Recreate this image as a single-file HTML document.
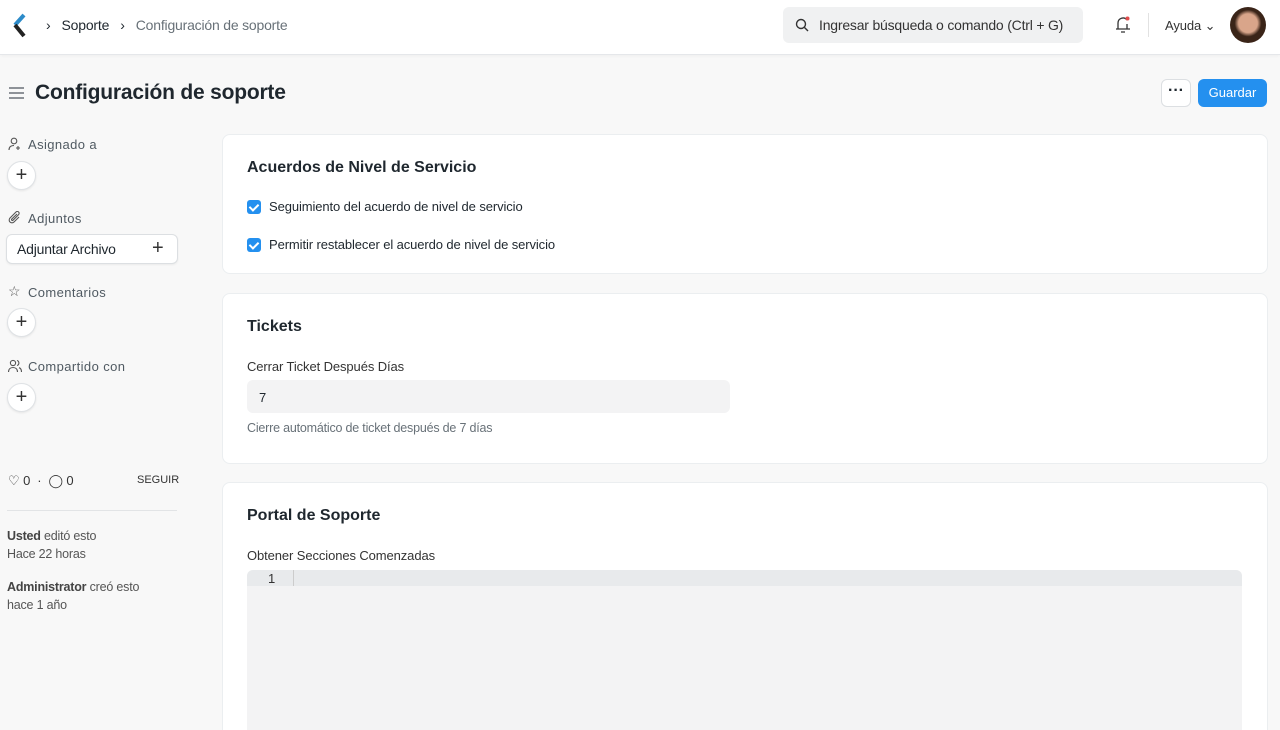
<!DOCTYPE html>
<html style="width:1280px;height:730px;overflow:hidden"><head><meta charset="utf-8"><style>
*{box-sizing:border-box;margin:0;padding:0}
body{width:1280px;height:730px;overflow:hidden;background:#f8f8f8;font-family:"Liberation Sans",sans-serif;color:#1f272e;position:relative}
.nav{position:absolute;left:0;top:0;width:1280px;height:55px;background:#fff;border-bottom:1px solid #e5e7ea;box-shadow:0 1px 3px rgba(0,0,0,.04)}
.abs{position:absolute}
.t13{font-size:13px;letter-spacing:-.1px}
.card{position:absolute;left:222px;width:1046px;background:#fff;border:1px solid #ebeef0;border-radius:8px}
.h{font-size:16px;font-weight:bold;position:absolute;left:24px}
.cb{position:absolute;left:25px;width:14px;height:14px;border-radius:3px;background:#2490ef}
.cb:after{content:"";position:absolute;left:4px;top:2px;width:4px;height:7px;border:solid #fff;border-width:0 2px 2px 0;transform:rotate(45deg)}
.plus{position:absolute;left:7px;width:29px;height:29px;border-radius:50%;background:#fff;border:1px solid #dfe2e5;box-shadow:0 1px 2px rgba(0,0,0,.08);font-size:20px;line-height:26px;text-align:center;color:#333}
.sl{position:absolute;left:28px;font-size:13px;color:#505a62;letter-spacing:.4px}
.muted{color:#687178}
</style></head><body>
<div class="nav">
 <svg class="abs" style="left:12px;top:13px" width="16" height="26" viewBox="0 0 16 26"><path d="M12 2 L3 12" stroke="#2d8bc9" stroke-width="4"/><path d="M3 12 L12 23" stroke="#222" stroke-width="4"/></svg>
 <div class="abs" style="left:46px;top:17px;font-size:14px;letter-spacing:-.2px">›&nbsp;&nbsp; Soporte &nbsp;&nbsp;›&nbsp;&nbsp; <span class="muted">Configuración de soporte</span></div>
 <div class="abs" style="left:783px;top:7px;width:300px;height:36px;background:#f0f1f2;border-radius:6px">
  <svg class="abs" style="left:12px;top:11px" width="14" height="14" viewBox="0 0 14 14"><circle cx="6" cy="6" r="4.5" stroke="#333" stroke-width="1.4" fill="none"/><path d="M9.5 9.5L13 13" stroke="#333" stroke-width="1.4"/></svg>
  <div class="abs" style="left:36px;top:10px;font-size:14px;color:#333;letter-spacing:-.2px">Ingresar búsqueda o comando (Ctrl + G)</div>
 </div>
 <svg class="abs" style="left:1114px;top:15px" width="18" height="20" viewBox="0 0 18 20"><path d="M4 14V8a5 5 0 0 1 9 -3M13 9v5M2 14h14M7 17h4" stroke="#333" stroke-width="1.3" fill="none"/><circle cx="13.5" cy="3.5" r="2" fill="#e24c4c"/></svg>
 <div class="abs" style="left:1148px;top:13px;width:1px;height:24px;background:#e2e2e2"></div>
 <div class="abs t13" style="left:1165px;top:18px;color:#333">Ayuda ⌄</div>
 <div class="abs" style="left:1230px;top:7px;width:36px;height:36px;border-radius:50%;background:radial-gradient(circle at 50% 45%,#d9a58a 0 35%,#3a2418 50%)"></div>
</div>
<svg class="abs" style="left:9px;top:86px" width="16" height="14"><path d="M0 2h15M0 7h15M0 12h15" stroke="#6b7178" stroke-width="1.5"/></svg>
<div class="abs" style="left:35px;top:81px;font-size:21px;font-weight:bold;letter-spacing:-.2px">Configuración de soporte</div>
<div class="abs" style="left:1161px;top:79px;width:30px;height:28px;background:#fff;border:1px solid #dcdfe2;border-radius:6px;text-align:center;line-height:22px;font-weight:bold">···</div>
<div class="abs" style="left:1198px;top:79px;width:69px;height:28px;background:#2490ef;border-radius:6px;color:#fff;font-size:13px;text-align:center;line-height:28px">Guardar</div>

<div class="sl" style="top:137px">Asignado a</div>
<svg class="abs" style="left:8px;top:137px" width="14" height="14" viewBox="0 0 14 14" fill="none" stroke="#555" stroke-width="1.1"><circle cx="6" cy="4" r="2.8"/><path d="M1 13c0-3 2-4.5 5-4.5M10 9v4M8 11h4"/></svg>
<div class="plus" style="top:161px">+</div>
<div class="sl" style="top:211px">Adjuntos</div>
<svg class="abs" style="left:8px;top:211px" width="14" height="14" viewBox="0 0 14 14" fill="none" stroke="#555" stroke-width="1.1"><path d="M11 6L6 11a2.8 2.8 0 0 1-4-4l6-6a1.8 1.8 0 0 1 2.6 2.6L5 9.2a.8.8 0 0 1-1.2-1.2L9 3"/></svg>
<div class="abs" style="left:6px;top:234px;width:172px;height:30px;background:#fff;border:1px solid #dcdfe2;border-radius:6px;box-shadow:0 1px 2px rgba(0,0,0,.06)"><span class="abs" style="left:10px;top:6px;font-size:14px;letter-spacing:-.2px">Adjuntar Archivo</span><span class="abs" style="left:145px;top:2px;font-size:20px;color:#333">+</span></div>
<div class="sl" style="top:285px">Comentarios</div>
<div class="abs" style="left:8px;top:283px;font-size:14px;color:#555">☆</div>
<div class="plus" style="top:308px">+</div>
<div class="sl" style="top:359px">Compartido con</div>
<svg class="abs" style="left:8px;top:359px" width="14" height="14" viewBox="0 0 14 14" fill="none" stroke="#555" stroke-width="1.1"><circle cx="5" cy="4" r="2.6"/><path d="M0.5 13c0-3 2-4.5 4.5-4.5S9.5 10 9.5 13M9 1.5a2.6 2.6 0 0 1 0 5M11 8.7c1.5.5 2.5 2 2.5 4.3"/></svg>
<div class="plus" style="top:383px">+</div>
<div class="abs t13" style="left:8px;top:473px;color:#333">♡ 0 &nbsp;·&nbsp; ◯ 0</div>
<div class="abs" style="left:137px;top:474px;font-size:11px;color:#333">SEGUIR</div>
<div class="abs" style="left:7px;top:510px;width:170px;height:1px;background:#e2e4e6"></div>
<div class="abs" style="left:7px;top:527px;font-size:12.5px;color:#555;line-height:18px;letter-spacing:-.2px"><b style="color:#444">Usted</b> editó esto<br>Hace 22 horas</div>
<div class="abs" style="left:7px;top:578px;font-size:12.5px;color:#555;line-height:18px;letter-spacing:-.2px"><b style="color:#444">Administrator</b> creó esto<br>hace 1 año</div>

<div class="card" style="top:134px;height:140px">
 <div class="h" style="top:24px">Acuerdos de Nivel de Servicio</div>
 <div class="cb" style="top:65px;left:24px"></div><div class="abs t13" style="left:46px;top:64px">Seguimiento del acuerdo de nivel de servicio</div>
 <div class="cb" style="top:103px;left:24px"></div><div class="abs t13" style="left:46px;top:102px">Permitir restablecer el acuerdo de nivel de servicio</div>
</div>
<div class="card" style="top:293px;height:171px">
 <div class="h" style="top:24px">Tickets</div>
 <div class="abs t13" style="left:24px;top:65px;color:#333">Cerrar Ticket Después Días</div>
 <div class="abs" style="left:24px;top:86px;width:483px;height:33px;background:#f3f3f4;border-radius:6px"><span class="abs t13" style="left:12px;top:10px">7</span></div>
 <div class="abs" style="left:24px;top:127px;font-size:12.5px;color:#687178;letter-spacing:-.2px">Cierre automático de ticket después de 7 días</div>
</div>
<div class="card" style="top:482px;height:260px;overflow:hidden">
 <div class="h" style="top:24px">Portal de Soporte</div>
 <div class="abs t13" style="left:24px;top:65px;color:#333">Obtener Secciones Comenzadas</div>
 <div class="abs" style="left:24px;top:87px;width:995px;height:170px;background:#f3f3f4;border-radius:6px 6px 0 0">
  <div style="height:16px;background:#e8eaec;border-radius:6px 6px 0 0"></div>
  <span class="abs t13" style="left:21px;top:1px;color:#333">1</span>
  <div class="abs" style="left:46px;top:0;width:1px;height:16px;background:#ccc"></div>
 </div>
</div>
</body></html>
